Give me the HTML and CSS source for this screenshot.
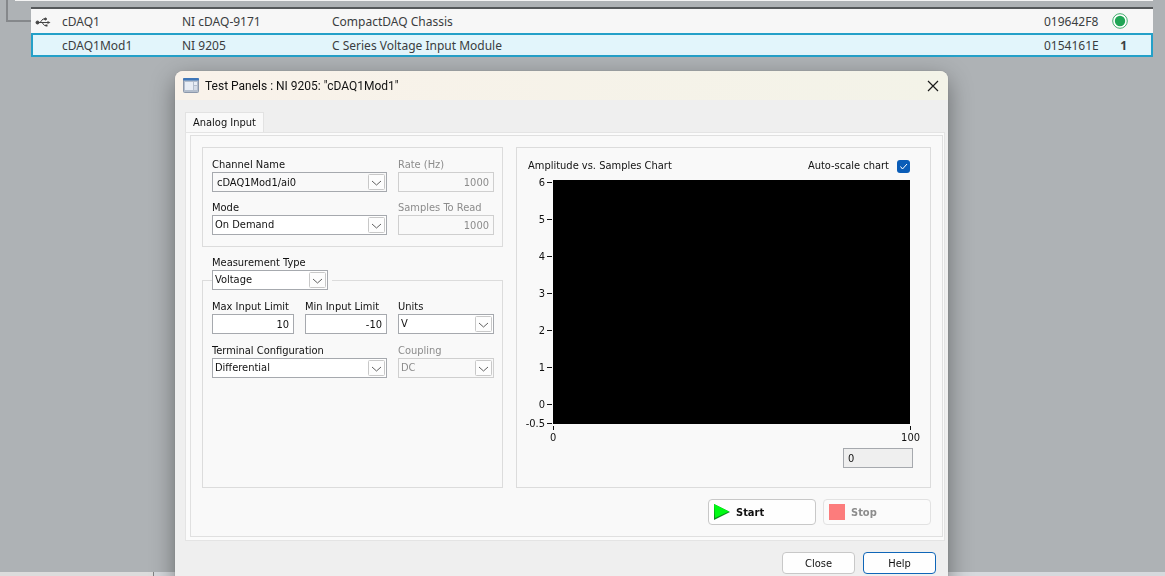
FILE: index.html
```html
<!DOCTYPE html>
<html lang="en">
<head>
    <meta charset="UTF-8">
    <meta name="viewport" content="width=device-width, initial-scale=1.0">
    <title>Test Panels</title>
    <link rel="stylesheet" href="styles.css">
</head>
<body>
    <main class="explorer">
        <div class="toolbar-edge"></div>
        <div class="tree-line"></div>
        <table class="devices">
            <colgroup>
                <col class="col-icon">
                <col class="col-name">
                <col class="col-model">
                <col>
                <col class="col-serial">
                <col class="col-slot">
            </colgroup>
            <tbody>
                <tr>
                    <td>
                        <svg class="usb" viewBox="0 0 16 12" width="16" height="12" fill="none" stroke="#444" stroke-width="1">
                            <path d="M3 6.5H13M5 6.5L8 3H10M7 6.5L9.500 9.500H11"/>
                            <circle cx="2.500" cy="6.500" r="1.500" fill="#444"/>
                            <path d="M12.500 5L15.500 6.500L12.500 8Z" fill="#444" stroke="none"/>
                            <circle cx="10.500" cy="3" r="1" fill="#444"/>
                            <path d="M10.500 8.500H12.500V10.500H10.500Z" fill="#444" stroke="none"/>
                        </svg>
                    </td>
                    <td>cDAQ1</td>
                    <td>NI cDAQ-9171</td>
                    <td>CompactDAQ Chassis</td>
                    <td>019642F8</td>
                    <td class="slot">
                        <svg class="status" viewBox="0 0 16 16" width="16" height="16">
                            <circle cx="8" cy="8" r="7.300" fill="#fff" stroke="#3fae6c"/>
                            <circle cx="8" cy="8" r="5.200" fill="#1fa555"/>
                        </svg>
                    </td>
                </tr>
                <tr class="selected">
                    <td></td>
                    <td>cDAQ1Mod1</td>
                    <td>NI 9205</td>
                    <td>C Series Voltage Input Module</td>
                    <td>0154161E</td>
                    <td class="slot">1</td>
                </tr>
            </tbody>
        </table>
    </main>

    <div class="statusbar"></div>

    <div class="dialog" role="dialog" aria-labelledby="dialog-title">
        <header class="titlebar">
            <svg viewBox="0 0 16 15" width="16" height="15">
                <rect x="0.500" y="0.500" width="15" height="14" rx="1" fill="#b4becd" stroke="#8c98ac"/>
                <rect width="16" height="2.500" rx="1" fill="#3f76b8"/>
                <rect x="2" y="4" width="8" height="8" fill="#e8edf5"/>
                <rect x="11" y="4" width="3" height="3" fill="#e8edf5"/>
                <rect x="11" y="8" width="3" height="4" fill="#d5dce8"/>
            </svg>
            <h1 id="dialog-title">Test Panels : NI 9205: "cDAQ1Mod1"</h1>
            <button class="close-x" type="button" aria-label="Close window">
                <svg viewBox="0 0 12 12" width="12" height="12" stroke="#1a1a1a" stroke-width="1.200">
                    <path d="M1 1L11 11M11 1L1 11"/>
                </svg>
            </button>
        </header>

        <div class="tabs">
            <button class="tab" type="button">Analog Input</button>
        </div>

        <div class="tab-frame">
            <form class="tab-page">
                <div class="settings">
                    <section class="group timing">
                        <div class="field span-2">
                            <label for="channel">Channel Name</label>
                            <select id="channel" class="channel"><option>cDAQ1Mod1/ai0</option></select>
                        </div>
                        <div class="field">
                            <label class="off" for="rate">Rate (Hz)</label>
                            <input id="rate" type="text" value="1000" disabled>
                        </div>
                        <div class="field span-2">
                            <label for="mode">Mode</label>
                            <select id="mode"><option>On Demand</option></select>
                        </div>
                        <div class="field">
                            <label class="off" for="samples">Samples To Read</label>
                            <input id="samples" type="text" value="1000" disabled>
                        </div>
                    </section>

                    <div class="field measurement">
                        <label for="measurement">Measurement Type</label>
                        <div class="on-border">
                            <select id="measurement"><option>Voltage</option></select>
                        </div>
                    </div>

                    <section class="group limits">
                        <div class="field">
                            <label for="max">Max Input Limit</label>
                            <input id="max" type="text" value="10">
                        </div>
                        <div class="field">
                            <label for="min">Min Input Limit</label>
                            <input id="min" type="text" value="-10">
                        </div>
                        <div class="field">
                            <label for="units">Units</label>
                            <select id="units"><option>V</option></select>
                        </div>
                        <div class="field span-2">
                            <label for="terminal">Terminal Configuration</label>
                            <select id="terminal"><option>Differential</option></select>
                        </div>
                        <div class="field">
                            <label class="off" for="coupling">Coupling</label>
                            <select id="coupling" disabled><option>DC</option></select>
                        </div>
                    </section>
                </div>

                <section class="group chart">
                    <div class="chart-head">
                        <span>Amplitude vs. Samples Chart</span>
                        <label class="autoscale">Auto-scale chart <input type="checkbox" checked></label>
                    </div>
                    <div class="chart-body">
                        <div class="y-axis">
                            <span>6</span>
                            <span>5</span>
                            <span>4</span>
                            <span>3</span>
                            <span>2</span>
                            <span>1</span>
                            <span>0</span>
                            <span>-0.5</span>
                        </div>
                        <div class="plot-area">
                            <div class="plot"></div>
                            <div class="x-axis">
                                <span>0</span>
                                <span>100</span>
                            </div>
                        </div>
                    </div>
                    <input class="readout" type="text" value="0" aria-label="Value" readonly>
                </section>

                <div class="actions">
                    <button type="button">
                        <svg viewBox="0 0 16 16" width="16" height="16">
                            <path d="M0 0L16 8L0 16Z" fill="#0a8a1c"/>
                            <path d="M0 0L15 7.500L1 14Z" fill="#00fa14"/>
                        </svg>
                        Start
                    </button>
                    <button type="button" disabled>
                        <svg viewBox="0 0 16 16" width="16" height="16"><rect width="16" height="16" fill="#fc7c7c"/></svg>
                        Stop
                    </button>
                </div>
            </form>
        </div>

        <footer class="dialog-buttons">
            <button type="button">Close</button>
            <button class="default" type="button">Help</button>
        </footer>
    </div>
</body>
</html>
```
FILE: styles.css
```css
:root {
    --desktop: #aeb2b5;
    --dialog: #efefef;
    --page: #f9f9f9;
    --line: #dcdcdc;
    --field-line: #a6a9ae;
    --accent: #24a0c8;
    --ui-font: "DejaVu Sans Condensed", Tahoma, sans-serif;
}

* {
    box-sizing: border-box;
}

body {
    margin: 0;
    min-height: 100vh;
    overflow: hidden;
    background: var(--desktop);
    color: #111;
    font: 11px/15px var(--ui-font);
}

h1 {
    margin: 0;
}

button, input, select {
    font: inherit;
    color: inherit;
}

/* device list behind the dialog */
.explorer {
    position: relative;
    padding-right: 12px;
}

.toolbar-edge {
    height: 1px;
    margin-left: 15px;
    background: #f4f4f4;
}

.tree-line {
    position: absolute;
    top: 0;
    left: 6px;
    width: 25px;
    height: 22px;
    border: solid #85888b;
    border-width: 0 0 2px 2px;
}

.devices {
    width: calc(100% - 31px);
    margin: 6px 0 0 31px;
    border-top: 2px solid #55585a;
    border-spacing: 0;
    table-layout: fixed;
    background: #f7f7f7;
    color: #3a3d40;
    font: 12px/20px "Noto Sans", sans-serif;
}

.devices td {
    height: 24px;
    padding: 2px 0 0;
    white-space: nowrap;
}

.col-icon { width: 31px; }
.col-name { width: 120px; }
.col-model { width: 150px; }
.col-serial { width: 61px; }
.col-slot { width: 48px; }

.devices .selected td {
    padding: 1px 0 0;
    background: #e2f5fb;
    border: solid var(--accent);
    border-width: 2px 0;
    line-height: 19px;
}

.devices .selected td:first-child { border-left-width: 2px; }
.devices .selected td:last-child { border-right-width: 2px; }

.devices .slot {
    padding-right: 18px;
    text-align: right;
    font-weight: bold;
}

.devices .selected .slot {
    padding-right: 24px;
}

.usb {
    display: block;
    margin-left: 4px;
}

.status {
    display: block;
    margin: 0 7px 2px auto;
}

.statusbar {
    position: fixed;
    right: 0;
    bottom: 0;
    left: 0;
    height: 4px;
    background: linear-gradient(to right, #dcdcdc 153px, #808080 153px, #808080 154px, #d6d9dd 154px);
}

/* dialog */
.dialog {
    position: absolute;
    top: 71px;
    right: 217px;
    left: 175px;
    background: var(--dialog);
    border-radius: 8px 8px 0 0;
    box-shadow: 0 0 1px #666, 0 8px 24px rgba(0, 0, 0, 0.4);
}

.titlebar {
    display: flex;
    align-items: center;
    gap: 6px;
    height: 29px;
    margin-bottom: 1px;
    padding: 0 8px;
    border-radius: 8px 8px 0 0;
    background: linear-gradient(to right, #f9f2ea, #f3f3e8);
}

.titlebar h1 {
    flex: 1;
    font: 12px/16px Roboto, sans-serif;
}

.close-x {
    display: flex;
    padding: 1px;
    border: 0;
    background: none;
}

.tabs {
    display: flex;
    padding: 11px 0 0 10px;
}

.tab {
    height: 20px;
    padding: 0 7px;
    border: 1px solid #e2e2e2;
    border-bottom: 0;
    background: var(--page);
}

.tab-frame {
    margin: 0 3px 0 10px;
    padding: 2px 1px 3px 4px;
    border: 1px solid #e4e4e4;
    background: #fbfbfb;
}

.tab-page {
    display: grid;
    grid-template-columns: 301px 1fr;
    gap: 11px 13px;
    padding: 11px;
    border: 1px solid #e0e0e0;
    background: var(--page);
}

.settings {
    display: flex;
    flex-direction: column;
}

.group {
    border: 1px solid var(--line);
}

.timing, .limits {
    display: grid;
    grid-template-columns: 82fr 82fr 96fr;
    align-content: start;
    gap: 8px 11px;
    padding: 9px 8px 11px 9px;
}

.limits {
    flex: 1;
    row-gap: 9px;
    margin-top: -10px;
    padding-top: 18px;
}

.span-2 {
    grid-column: span 2;
}

.field {
    display: flex;
    flex-direction: column;
    min-width: 0;
}

.field label {
    white-space: nowrap;
}

.field .off {
    color: #8c8c8c;
}

.field input, .field select, .readout {
    width: 100%;
    height: 20px;
    padding: 0 4px;
    border: 1px solid var(--field-line);
    border-radius: 0;
    background: #fff;
}

.field input {
    text-align: right;
}

.field select {
    appearance: none;
    padding: 0 20px 2px 2px;
    background: #fff url("data:image/svg+xml,%3Csvg xmlns='http://www.w3.org/2000/svg' width='17' height='16' fill='none'%3E%3Crect x='.5' y='.5' width='16' height='15' rx='1' fill='%23fdfdfd' stroke='%23c8c8c8'/%3E%3Cpath d='M4 7l4.500 4 4.500-4' stroke='%23606060'/%3E%3C/svg%3E") right 1px center no-repeat;
}

.field .channel {
    padding: 0 20px 0 4px;
    background-color: var(--page);
}

.field input:disabled, .field select:disabled {
    border-color: #cfcfcf;
    background-color: var(--page);
    color: #8c8c8c;
    opacity: 1;
}

.measurement {
    align-items: flex-start;
    margin-top: 8px;
    padding: 0 10px;
    z-index: 1;
}

/* hides the group border on both sides of the select */
.on-border {
    width: 120px;
    padding-right: 4px;
    background: var(--page);
}

.chart {
    padding: 10px 20px 19px 7px;
}

.chart-head {
    display: flex;
    justify-content: space-between;
    padding-left: 4px;
    line-height: 16px;
}

.autoscale {
    display: flex;
    align-items: center;
    gap: 8px;
}

.autoscale input {
    appearance: none;
    width: 13px;
    height: 13px;
    margin: 0;
    border-radius: 3px;
    background: #0a5db8 url("data:image/svg+xml,%3Csvg xmlns='http://www.w3.org/2000/svg' width='13' height='13' fill='none'%3E%3Cpath d='M3.500 6.500l2 2.500 4.500-5' stroke='white'/%3E%3C/svg%3E");
}

.chart-body {
    display: flex;
}

.y-axis {
    display: grid;
    grid-template-rows: repeat(6, 37px) 19px 15px;
    width: 29px;
    flex: none;
    padding-top: 1px;
}

.y-axis span {
    display: flex;
    align-items: center;
    justify-content: flex-end;
    gap: 2px;
    height: 15px;
    padding-right: 1px;
}

.y-axis span::after {
    content: "";
    width: 5px;
    height: 1px;
    background: #111;
}

.plot-area {
    flex: 1;
    padding-top: 6px;
}

.plot {
    height: 244px;
    background: #000;
}

.x-axis {
    display: flex;
    justify-content: space-between;
    margin: 2px -10px 0 -3px;
}

.x-axis span {
    display: flex;
    flex-direction: column;
    align-items: center;
}

.x-axis span::before {
    content: "";
    width: 1px;
    height: 4px;
    background: #111;
}

.readout {
    display: block;
    width: 70px;
    margin: 3px -3px 0 auto;
    background: var(--dialog);
}

.actions {
    display: flex;
    grid-column: 2;
    justify-content: flex-end;
    gap: 7px;
}

.actions button {
    display: flex;
    align-items: center;
    gap: 6px;
    width: 108px;
    height: 26px;
    padding: 0 5px;
    border: 1px solid #c8c8c8;
    border-radius: 4px;
    background: #fefefe;
    font: bold 11px/15px "DejaVu Sans Condensed", Tahoma, sans-serif;
}

.actions button:disabled {
    border-color: #e2e2e2;
    background: #fbfbfb;
    color: #8c8c8c;
}

.dialog-buttons {
    display: flex;
    justify-content: flex-end;
    gap: 8px;
    padding: 11px 12px 20px;
}

.dialog-buttons button {
    width: 73px;
    height: 22px;
    padding: 0;
    border: 1px solid #c8c8c8;
    border-radius: 4px;
    background: #fefefe;
}

.dialog-buttons .default {
    border-color: #0f66b8;
}
```
